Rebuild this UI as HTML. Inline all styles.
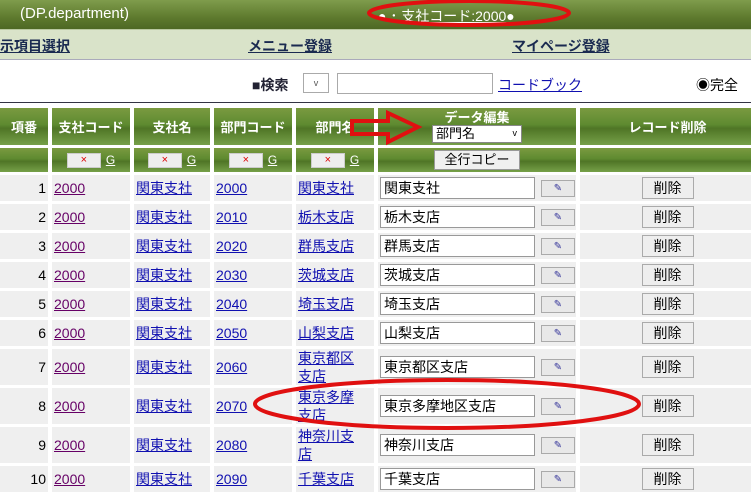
<!DOCTYPE html>
<html><head><meta charset="utf-8"><style>
*{margin:0;padding:0;box-sizing:border-box}
body{width:751px;height:499px;overflow:hidden;background:#fff;font-family:"Liberation Sans","Noto Sans CJK JP",sans-serif;font-size:14px;position:relative}
.hdr{position:absolute;left:0;top:0;width:751px;height:29px;background:linear-gradient(#7f9c4c,#5e7a2e 60%,#4d6824);color:#fff;font-size:15px}
.nav{position:absolute;left:0;top:29px;width:751px;height:31px;background:#d9e3c9;border-top:1px solid #b8c8a0;border-bottom:1px solid #aab;}
.nav a{position:absolute;top:6px;color:#1a2a50;font-weight:bold;text-decoration:underline;font-size:14px}
a{color:#1010b0;text-decoration:underline}
table{position:absolute;left:-4px;top:105px;border-collapse:separate;border-spacing:4px 3px;width:763px;table-layout:fixed}
td{background:#efefef;vertical-align:middle;white-space:nowrap;padding:0 2px;overflow:hidden}
.g td{background:linear-gradient(#7a9a40,#5e8a30 45%,#4f7526 55%,#76a048);color:#fff;text-align:center;font-weight:bold;font-size:13px}
.n{text-align:right}
.inp{display:inline-block;width:155px;height:22px;border:1px solid #999;background:#fff;vertical-align:middle;padding:0 3px;font-size:14px;line-height:20px;color:#000}
.eb{display:inline-block;width:34px;height:17px;border:1px solid #aaa;background:#e8e8e8;vertical-align:middle;margin-left:6px;text-align:center;font-size:10px;color:#339;line-height:15px}
.db{display:inline-block;width:52px;height:22px;border:1px solid #aaa;background:#eee;text-align:center;line-height:20px;font-size:14px;color:#000}
.xb{display:inline-block;width:34px;height:15px;background:#eee;border:1px solid #ccc;color:#d00;font-size:11px;line-height:13px;font-weight:normal;vertical-align:middle}
.gl{color:#fff;font-weight:normal;text-decoration:underline;margin-left:5px;font-size:12px}
</style></head><body>
<div class="hdr"><span style="position:absolute;left:20px;top:5px">(DP.department)</span>
<span style="position:absolute;left:378px;top:6px;font-size:14px">● ･ <u>支社コード:2000</u>●</span></div>
<div class="nav"><a style="left:0">示項目選択</a><a style="left:248px">メニュー登録</a><a style="left:512px">マイページ登録</a></div>
<div style="position:absolute;left:252px;top:75px;font-weight:bold;color:#223">■検索</div>
<div style="position:absolute;left:303px;top:73px;width:26px;height:20px;border:1px solid #aaa;font-size:9px;text-align:center;line-height:18px;color:#555">v</div>
<div style="position:absolute;left:337px;top:73px;width:156px;height:21px;border:1px solid #aaa"></div>
<a style="position:absolute;left:498px;top:75px">コードブック</a>
<div style="position:absolute;left:696px;top:75px">◉完全</div>
<div style="position:absolute;left:0;top:102px;width:751px;height:1px;background:#334"></div>
<table>
<colgroup><col style="width:48px"><col style="width:78px"><col style="width:76px"><col style="width:78px"><col style="width:78px"><col style="width:198px"><col style="width:175px"></colgroup>
<tr class="g" style="height:37px"><td>項番</td><td>支社コード</td><td>支社名</td><td>部門コード</td><td>部門名</td><td style="line-height:15px">データ編集<br><span style="display:inline-block;width:90px;height:18px;background:#fff;border:1px solid #888;color:#000;font-weight:normal;text-align:left;padding-left:3px;font-size:13px">部門名 <span style="float:right;font-size:9px;margin-right:4px">v</span></span></td><td>レコード削除</td></tr>
<tr class="g" style="height:24px"><td></td><td><span class="xb">×</span><span class="gl">G</span></td><td><span class="xb">×</span><span class="gl">G</span></td><td><span class="xb">×</span><span class="gl">G</span></td><td><span class="xb">×</span><span class="gl">G</span></td><td><span style="display:inline-block;width:86px;height:20px;background:#f0f0f0;border:1px solid #999;color:#000;font-weight:normal;line-height:18px">全行コピー</span></td><td></td></tr>
<tr style="height:26px"><td class="n">1</td><td><a style="color:#606">2000</a></td><td><a>関東支社</a></td><td><a>2000</a></td><td><a>関東支社</a></td><td><span class="inp">関東支社</span><span class="eb">✎</span></td><td style="text-align:center"><span class="db">削除</span></td></tr>
<tr style="height:26px"><td class="n">2</td><td><a style="color:#606">2000</a></td><td><a>関東支社</a></td><td><a>2010</a></td><td><a>栃木支店</a></td><td><span class="inp">栃木支店</span><span class="eb">✎</span></td><td style="text-align:center"><span class="db">削除</span></td></tr>
<tr style="height:26px"><td class="n">3</td><td><a style="color:#606">2000</a></td><td><a>関東支社</a></td><td><a>2020</a></td><td><a>群馬支店</a></td><td><span class="inp">群馬支店</span><span class="eb">✎</span></td><td style="text-align:center"><span class="db">削除</span></td></tr>
<tr style="height:26px"><td class="n">4</td><td><a style="color:#606">2000</a></td><td><a>関東支社</a></td><td><a>2030</a></td><td><a>茨城支店</a></td><td><span class="inp">茨城支店</span><span class="eb">✎</span></td><td style="text-align:center"><span class="db">削除</span></td></tr>
<tr style="height:26px"><td class="n">5</td><td><a style="color:#606">2000</a></td><td><a>関東支社</a></td><td><a>2040</a></td><td><a>埼玉支店</a></td><td><span class="inp">埼玉支店</span><span class="eb">✎</span></td><td style="text-align:center"><span class="db">削除</span></td></tr>
<tr style="height:26px"><td class="n">6</td><td><a style="color:#606">2000</a></td><td><a>関東支社</a></td><td><a>2050</a></td><td><a>山梨支店</a></td><td><span class="inp">山梨支店</span><span class="eb">✎</span></td><td style="text-align:center"><span class="db">削除</span></td></tr>
<tr style="height:36px"><td class="n">7</td><td><a style="color:#606">2000</a></td><td><a>関東支社</a></td><td><a>2060</a></td><td style="white-space:normal;line-height:18px"><a>東京都区<br>支店</a></td><td><span class="inp">東京都区支店</span><span class="eb">✎</span></td><td style="text-align:center"><span class="db">削除</span></td></tr>
<tr style="height:36px"><td class="n">8</td><td><a style="color:#606">2000</a></td><td><a>関東支社</a></td><td><a>2070</a></td><td style="white-space:normal;line-height:18px"><a>東京多摩<br>支店</a></td><td><span class="inp">東京多摩地区支店</span><span class="eb">✎</span></td><td style="text-align:center"><span class="db">削除</span></td></tr>
<tr style="height:35px"><td class="n">9</td><td><a style="color:#606">2000</a></td><td><a>関東支社</a></td><td><a>2080</a></td><td style="white-space:normal;line-height:18px"><a>神奈川支<br>店</a></td><td><span class="inp">神奈川支店</span><span class="eb">✎</span></td><td style="text-align:center"><span class="db">削除</span></td></tr>
<tr style="height:26px"><td class="n">10</td><td><a style="color:#606">2000</a></td><td><a>関東支社</a></td><td><a>2090</a></td><td><a>千葉支店</a></td><td><span class="inp">千葉支店</span><span class="eb">✎</span></td><td style="text-align:center"><span class="db">削除</span></td></tr>
</table>
<svg style="position:absolute;left:0;top:0" width="751" height="499">
<ellipse cx="469" cy="13" rx="100" ry="12" fill="none" stroke="#e01010" stroke-width="4"/>
<ellipse cx="447" cy="404" rx="192" ry="24" fill="none" stroke="#e01010" stroke-width="4"/>
<path d="M352 121 L388 121 L388 113 L418 127 L388 142 L388 134 L352 134 Z" fill="none" stroke="#e01010" stroke-width="4"/>
</svg>
</body></html>
